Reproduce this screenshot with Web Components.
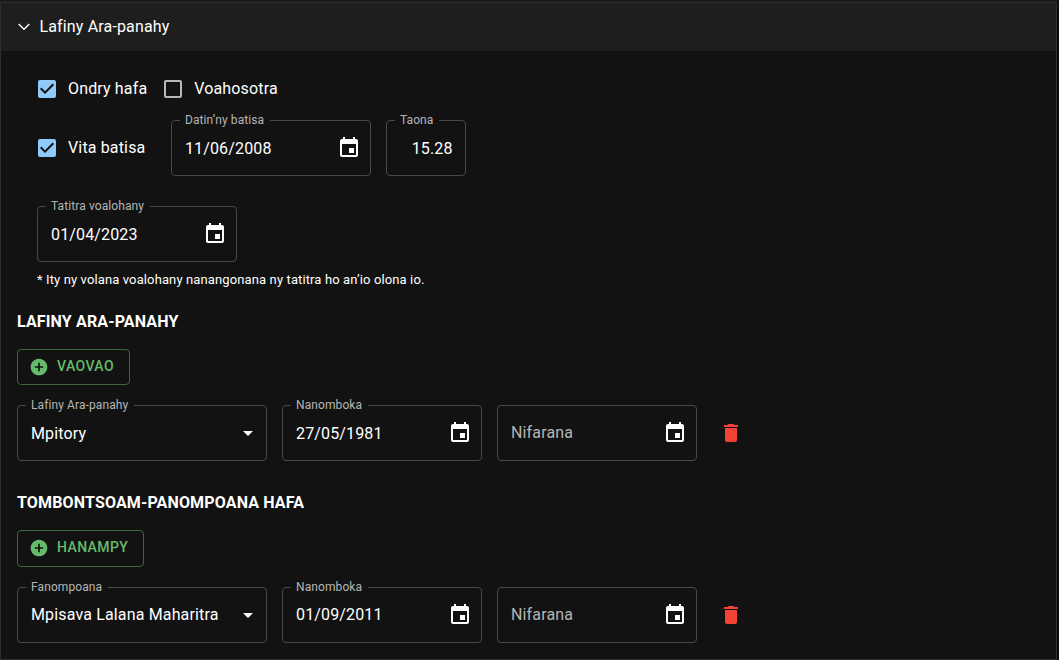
<!DOCTYPE html>
<html lang="mg">
<head>
<meta charset="utf-8">
<title>Lafiny Ara-panahy</title>
<style>
html{background:#0c0c0f}
body{margin:0;height:660px;overflow:hidden;background:#1b1b1b;color:#fff;font-family:Roboto,sans-serif;font-size:16px}
</style>
</head>
<body>
<spirit-page></spirit-page>
<script>
const ICONS={
 calendar:'M19 4h-1V2h-2v2H8V2H6v2H5c-1.11 0-1.99.9-1.99 2L3 20c0 1.1.89 2 2 2h14c1.1 0 2-.9 2-2V6c0-1.1-.9-2-2-2zm0 16H5V9h14v11zm-7-7h5v5h-5z',
 arrow:'M7 10l5 5 5-5z',
 trash:'M6 19c0 1.1.9 2 2 2h8c1.1 0 2-.9 2-2V7H6v12zM19 4h-3.5l-1-1h-5l-1 1H5v2h14V4z',
 add:'M12 2C6.48 2 2 6.48 2 12s4.48 10 10 10 10-4.48 10-10S17.52 2 12 2zm5 11h-4v4h-2v-4H7v-2h4V7h2v4h4v2z',
 checked:'M19 3H5c-1.11 0-2 .9-2 2v14c0 1.1.89 2 2 2h14c1.11 0 2-.9 2-2V5c0-1.1-.89-2-2-2zm-9 14l-5-5 1.41-1.41L10 14.17l7.59-7.59L19 8l-9 9z',
 unchecked:'M19 5v14H5V5h14m0-2H5c-1.1 0-2 .9-2 2v14c0 1.1.9 2 2 2h14c1.1 0 2-.9 2-2V5c0-1.1-.9-2-2-2z'
};
function define(name,render){
 customElements.define(name,class extends HTMLElement{
  constructor(){super();this.attachShadow({mode:'open'});}
  connectedCallback(){this.shadowRoot.innerHTML=render(this);}
 });
}
define('md-icon',el=>`<style>:host{display:block;width:24px;height:24px;flex:none}svg{display:block;width:100%;height:100%}</style>
<svg viewBox="0 0 24 24" fill="currentColor"><path d="${ICONS[el.getAttribute('name')]}"/></svg>`);
define('check-option',el=>{const on=el.hasAttribute('checked');return `<style>
:host{display:flex;align-items:center;height:42px;margin:0 16px 0 -11px;letter-spacing:.15px;white-space:nowrap}
md-icon{margin:9px;color:${on?'#90caf9':'#b8b8b8'}}
span{padding-bottom:2px}
</style><md-icon name="${on?'checked':'unchecked'}"></md-icon><span><slot></slot></span>`;});
define('outlined-field',el=>{const label=el.getAttribute('label'),icon=el.getAttribute('icon');return `<style>
:host{display:flex;position:relative;box-sizing:border-box;width:200px;height:56px;padding:0 8px 0 13px;border:1px solid #494949;border-radius:4px;align-items:center;flex:none;letter-spacing:.15px}
:host([wide]){width:250px;padding-right:6px}
:host([small]){width:80px;padding-right:12px}
:host([empty]){color:#b5b5b5}
.label{position:absolute;left:8px;top:-9px;height:16px;line-height:16px;padding:0 6px 0 5px;background:#121212;color:#b5b5b5;font-size:12px;letter-spacing:.1px;white-space:nowrap}
.value{flex:1;white-space:nowrap;line-height:23px}
:host([empty]) .value,:host([raised]) .value{padding-bottom:2px}
:host([small]) .value{text-align:right}
:host([near]) .label{padding-left:4.5px}
:host([near]){padding-left:12.5px}
:host([small]){padding-right:12.8px}
md-icon{color:#fff}
md-icon[name=calendar]{margin:0 1px 2px 0}
</style>${label?`<span class="label">${label}</span>`:''}<span class="value"><slot></slot></span>${icon?`<md-icon name="${icon}"></md-icon>`:''}`;});
define('add-button',()=>`<style>
:host{display:inline-flex;box-sizing:border-box;align-items:center;height:36px;padding:0 15px 0 11px;border:1px solid #3a683c;border-radius:4px;color:#66bb6a;font-size:14px;font-weight:500;letter-spacing:.4px;line-height:24px;text-transform:uppercase}
md-icon{width:20px;height:20px;margin-right:8px}
span{padding-bottom:2px}
:host([tall]) md-icon{margin-bottom:1px}
:host([tall]) span{padding-bottom:3px}
</style><md-icon name="add"></md-icon><span><slot></slot></span>`);
define('section-title',()=>`<style>:host{display:block;height:24px;line-height:24px;font-weight:700;letter-spacing:.15px;white-space:nowrap}</style><slot></slot>`);
define('field-row',()=>`<style>:host{display:flex;gap:15px;height:56px;align-items:center}</style><slot></slot>`);
define('delete-button',()=>`<style>:host{display:block;margin-left:7px;color:#f44336}</style><md-icon name="trash"></md-icon>`);
define('panel-header',()=>`<style>
:host{display:flex;align-items:center;height:48px;box-sizing:border-box;padding:0 0 2px 16px;background:#1e1e1e;letter-spacing:.15px}
svg{width:14px;height:14px;margin-right:8.5px}
</style><svg viewBox="0 0 14 14" fill="none" stroke="#fff" stroke-width="1.4"><path d="M1.7 4.9 7 10.2l5.3-5.3"/></svg><span><slot></slot></span>`);
define('spirit-page',()=>`<style>
:host{display:block;height:660px;box-sizing:border-box;padding:2px 2px 0 0;background:linear-gradient(90deg,#1b1b1b 1057px,#0c0c0f 1057px)}
.panel{box-sizing:border-box;height:658px;border:1px solid #2d2d2d;background:#121212}
.main{padding:17px 16px 0}
.inner{padding-left:20px}
.checks{display:flex;height:42px}
.baptism{display:flex;align-items:center;margin-top:10px;gap:15px}
.baptism check-option{margin-right:11px}
.first{display:block;margin-top:30px}
.note{margin-top:8px;height:20px;line-height:20px;font-size:13px;letter-spacing:.12px;white-space:nowrap}
.t1{margin-top:20px}
.t2{margin-top:30px}
.action{display:flex;margin:15px 0 20px}
</style>
<div class="panel"><panel-header>Lafiny Ara-panahy</panel-header>
<div class="main">
<div class="inner">
<div class="checks"><check-option checked>Ondry hafa</check-option><check-option>Voahosotra</check-option></div>
<div class="baptism"><check-option checked>Vita batisa</check-option><outlined-field near label="Datin’ny batisa" icon="calendar">11/06/2008</outlined-field><outlined-field near small label="Taona">15.28</outlined-field></div>
<div class="first"><outlined-field label="Tatitra voalohany" icon="calendar">01/04/2023</outlined-field></div>
<div class="note">* Ity ny volana voalohany nanangonana ny tatitra ho an’io olona io.</div>
</div>
<section-title class="t1">LAFINY ARA-PANAHY</section-title>
<div class="action"><add-button>Vaovao</add-button></div>
<field-row><outlined-field wide label="Lafiny Ara-panahy" icon="arrow">Mpitory</outlined-field><outlined-field label="Nanomboka" icon="calendar">27/05/1981</outlined-field><outlined-field empty icon="calendar">Nifarana</outlined-field><delete-button></delete-button></field-row>
<section-title class="t2">TOMBONTSOAM-PANOMPOANA HAFA</section-title>
<div class="action"><add-button tall style="height:37px">Hanampy</add-button></div>
<field-row><outlined-field wide raised label="Fanompoana" icon="arrow">Mpisava Lalana Maharitra</outlined-field><outlined-field raised label="Nanomboka" icon="calendar">01/09/2011</outlined-field><outlined-field empty icon="calendar">Nifarana</outlined-field><delete-button></delete-button></field-row>
</div></div>`);
</script>
</body>
</html>
